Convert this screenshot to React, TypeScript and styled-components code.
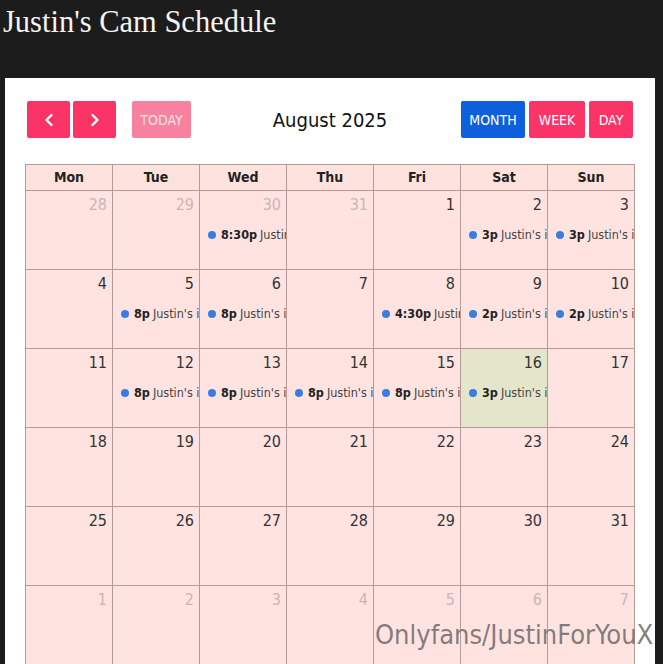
import { styled, createGlobalStyle } from 'styled-components';

const GlobalStyle = createGlobalStyle`
  html, body {
    margin: 0;
    padding: 0;
    background-color: #1c1c1c;
  }
  body {
    overflow: hidden;
  }
`;

const calFont = `"Liberation Sans Narrow", "DejaVu Sans Condensed", "Roboto", sans-serif`;

const Page = styled.div`
  position: relative;
  width: 663px;
  height: 664px;
  overflow: hidden;
  background-color: #1c1c1c;
`;

const Header = styled.header`
  height: 78px;
  padding-left: 3px;
`;

const Title = styled.h1`
  margin: 0;
  padding-top: 4px;
  font-family: "Liberation Serif", "DejaVu Serif", serif;
  font-weight: normal;
  font-size: 30.5px;
  line-height: 36px;
  color: #f4f4f4;
`;

const Panel = styled.main`
  margin: 0 8px 0 5px;
  height: 586px;
  background-color: #ffffff;
  padding: 23px 20px 0 20px;
  box-sizing: border-box;
`;

const Toolbar = styled.div`
  display: grid;
  grid-template-columns: 1fr auto 1fr;
  align-items: center;
  height: 37px;
  margin: 0 2px 0 2px;
`;

const Group = styled.div<{ $end?: boolean; $gap: number }>`
  display: flex;
  gap: ${(p) => p.$gap}px;
  justify-content: ${(p) => (p.$end ? 'flex-end' : 'flex-start')};
`;

const Button = styled.button<{ $tone?: 'pink' | 'faded' | 'blue'; $w: number }>`
  height: 37px;
  width: ${(p) => p.$w}px;
  border: 0;
  border-radius: 2px;
  padding: 0;
  display: flex;
  align-items: center;
  justify-content: center;
  font-family: ${calFont};
  font-size: 14px;
  text-transform: uppercase;
  color: #ffffff;
  background-color: ${(p) =>
    p.$tone === 'blue' ? '#0d5fdc' : p.$tone === 'faded' ? '#f7819f' : '#fb3468'};
  cursor: pointer;
`;

const TodayButton = styled(Button)`
  margin-left: 13px;
  color: #fde4ea;
`;

const MonthTitle = styled.h2`
  margin: 0;
  font-family: ${calFont};
  font-weight: normal;
  font-size: 20px;
  color: #111111;
`;

const Grid = styled.div`
  display: grid;
  grid-template-columns: repeat(7, 87px);
  margin-top: 26px;
  width: max-content;
  border-left: 1px solid #b49a98;
  border-top: 1px solid #b49a98;
  font-family: ${calFont};
`;

const HeadCell = styled.div`
  height: 25px;
  line-height: 25px;
  text-align: center;
  font-size: 14px;
  font-weight: bold;
  color: #222222;
  background-color: #fde2de;
  border-right: 1px solid #b49a98;
  border-bottom: 1px solid #b49a98;
`;

const DayCell = styled.div<{ $today?: boolean }>`
  height: 78px;
  overflow: hidden;
  background-color: ${(p) => (p.$today ? '#e4e6cb' : '#fee3e1')};
  border-right: 1px solid #b49a98;
  border-bottom: 1px solid #b49a98;
`;

const DayNumber = styled.div<{ $muted?: boolean }>`
  text-align: right;
  padding: 3px 5px 0 0;
  height: 22px;
  line-height: 22px;
  font-size: 16px;
  color: ${(p) => (p.$muted ? '#c9b6b5' : '#333333')};
`;

const Event = styled.div`
  display: flex;
  align-items: center;
  margin-top: 11px;
  padding-left: 8px;
  white-space: nowrap;
  overflow: hidden;
  font-size: 12.5px;
  color: #444444;
`;

const Dot = styled.span`
  flex: none;
  width: 8px;
  height: 8px;
  border-radius: 50%;
  background-color: #3b7ddd;
  margin-right: 5px;
`;

const Time = styled.b`
  color: #222222;
  margin-right: 3px;
`;

const Watermark = styled.div`
  position: absolute;
  left: 375px;
  top: 619px;
  font-family: "DejaVu Sans Condensed", "DejaVu Sans", sans-serif;
  font-size: 27px;
  color: rgba(110, 104, 104, 0.85);
  white-space: nowrap;
`;

type Day = { n: number; muted?: boolean; today?: boolean; time?: string };

const days: Day[] = [
  { n: 28, muted: true }, { n: 29, muted: true }, { n: 30, muted: true, time: '8:30p' },
  { n: 31, muted: true }, { n: 1 }, { n: 2, time: '3p' }, { n: 3, time: '3p' },
  { n: 4 }, { n: 5, time: '8p' }, { n: 6, time: '8p' }, { n: 7 },
  { n: 8, time: '4:30p' }, { n: 9, time: '2p' }, { n: 10, time: '2p' },
  { n: 11 }, { n: 12, time: '8p' }, { n: 13, time: '8p' }, { n: 14, time: '8p' },
  { n: 15, time: '8p' }, { n: 16, today: true, time: '3p' }, { n: 17 },
  { n: 18 }, { n: 19 }, { n: 20 }, { n: 21 }, { n: 22 }, { n: 23 }, { n: 24 },
  { n: 25 }, { n: 26 }, { n: 27 }, { n: 28 }, { n: 29 }, { n: 30 }, { n: 31 },
  { n: 1, muted: true }, { n: 2, muted: true }, { n: 3, muted: true }, { n: 4, muted: true },
  { n: 5, muted: true }, { n: 6, muted: true }, { n: 7, muted: true },
];

const weekdays = ['Mon', 'Tue', 'Wed', 'Thu', 'Fri', 'Sat', 'Sun'];

const Chevron = ({ dir }: { dir: 'left' | 'right' }) => (
  <svg width="10" height="14" viewBox="0 0 10 14" fill="none">
    <path
      d={dir === 'left' ? 'M7.5 2 L2.5 7 L7.5 12' : 'M2.5 2 L7.5 7 L2.5 12'}
      stroke="#ffffff"
      strokeWidth="2.4"
      strokeLinecap="round"
      strokeLinejoin="round"
    />
  </svg>
);

export default function App() {
  return (
    <Page>
      <GlobalStyle />
      <Header>
        <Title>Justin's Cam Schedule</Title>
      </Header>
      <Panel>
        <Toolbar>
          <Group $gap={3}>
            <Button $w={43} aria-label="prev"><Chevron dir="left" /></Button>
            <Button $w={43} aria-label="next"><Chevron dir="right" /></Button>
            <TodayButton $w={59} $tone="faded">today</TodayButton>
          </Group>
          <MonthTitle>August 2025</MonthTitle>
          <Group $end $gap={4}>
            <Button $w={64} $tone="blue">month</Button>
            <Button $w={56}>week</Button>
            <Button $w={44}>day</Button>
          </Group>
        </Toolbar>
        <Grid>
          {weekdays.map((d) => (
            <HeadCell key={d}>{d}</HeadCell>
          ))}
          {days.map((d, i) => (
            <DayCell key={i} $today={d.today}>
              <DayNumber $muted={d.muted}>{d.n}</DayNumber>
              {d.time && (
                <Event>
                  <Dot />
                  <Time>{d.time}</Time>
                  Justin's is live
                </Event>
              )}
            </DayCell>
          ))}
        </Grid>
      </Panel>
      <Watermark>Onlyfans/JustinForYouX</Watermark>
    </Page>
  );
}
